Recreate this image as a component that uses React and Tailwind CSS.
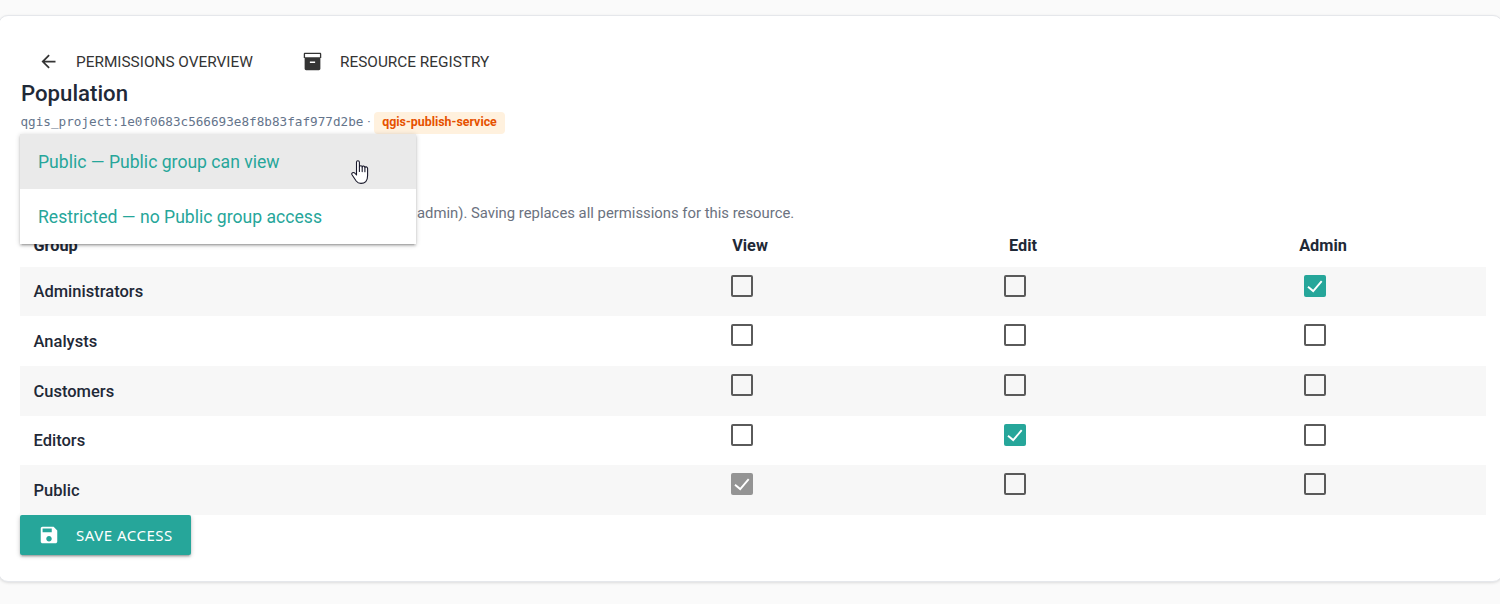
const GROUPS = [
  { name: 'Administrators', view: 'off', edit: 'off', admin: 'on', height: 'h-[49px]' },
  { name: 'Analysts', view: 'off', edit: 'off', admin: 'off', height: 'h-[50px]' },
  { name: 'Customers', view: 'off', edit: 'off', admin: 'off', height: 'h-[50px]' },
  { name: 'Editors', view: 'off', edit: 'on', admin: 'off', height: 'h-[49px]' },
  { name: 'Public', view: 'locked', edit: 'off', admin: 'off', height: 'h-[50px]' },
];

const COLUMNS = 'grid grid-cols-[594px_272px_274px_326px]';

const BOX_STYLES = {
  off: 'border-2 border-[#5a5a5a]',
  on: 'bg-[#26a69a]',
  locked: 'bg-[#949494]',
};

function Icon({ d, className }) {
  return (
    <svg viewBox="0 0 24 24" className={className} fill="currentColor" aria-hidden="true">
      <path d={d} />
    </svg>
  );
}

const ARROW_BACK = 'M20 11H7.83l5.59-5.59L12 4l-8 8 8 8 1.41-1.41L7.83 13H20v-2z';
const INVENTORY =
  'M20.5 2h-17C2.6 2 2 2.6 2 3.5V8h1v12.3c0 .9.8 1.7 1.7 1.7h14.6c.9 0 1.7-.8 1.7-1.7V8h1V3.5c0-.9-.6-1.5-1.5-1.5zM15 13.7H9V12h6v1.7zm5.5-6.500h-17V3.500h17v3.700z';
const SAVE =
  'M17 3H5c-1.11 0-2 .9-2 2v14c0 1.1.89 2 2 2h14c1.1 0 2-.9 2-2V7l-4-4zm-5 16c-1.66 0-3-1.34-3-3s1.34-3 3-3 3 1.34 3 3-1.34 3-3 3zm3-10H5V5h10v4z';

function Checkbox({ state }) {
  return (
    <div className="flex justify-center pt-2">
      <div className="w-[38px]">
        <span className={`block size-[22px] rounded-[2px] ${BOX_STYLES[state]}`}>
          {state !== 'off' && (
            <svg viewBox="0 0 22 22" className="block size-[22px]" fill="none" stroke="#fff" strokeWidth="1.9" aria-hidden="true">
              <path d="M4 11.7 9.2 16.1 17.7 6.2" />
            </svg>
          )}
        </span>
      </div>
    </div>
  );
}

function AccessMenu() {
  return (
    <ul className="absolute top-0 left-0 w-[396px] bg-white text-[17.6px] text-[#26a69a] shadow-[0_2px_2px_0_rgba(0,0,0,0.14),0_3px_1px_-2px_rgba(0,0,0,0.12),0_1px_5px_0_rgba(0,0,0,0.2)]">
      <li className="flex h-[55px] items-center bg-[#eaeaea] pt-[2px] pl-[18px]">Public — Public group can view</li>
      <li className="flex h-[55px] items-center pt-[2px] pl-[18px]">Restricted — no Public group access</li>
      <li className="absolute top-[26px] left-[331px]" aria-hidden="true">
        <svg viewBox="0 0 18 24" className="block h-6 w-[18px]" fill="#fff" stroke="#18182a" strokeWidth="1.1" strokeLinejoin="round" strokeLinecap="round">
          <path d="M5.5 14V2.2Q5.5.8 6.9.8T8.4 2.2V7q.2-1.3 1.5-1.2T11.2 7q.3-1.1 1.5-.9T13.9 7.6q.3-.9 1.4-.7t1.3 1.5V15.5Q16.6 19.8 14.8 21.6 13 23.4 10 23.4q-3 0-4.8-2.4L1 14.8Q.3 13.3 1.5 12.7T3.7 13L5.5 15z" />
          <path d="M8.4 7v4.4M11.2 7.3v4.3M13.9 7.8v4" />
        </svg>
      </li>
    </ul>
  );
}

export default function App() {
  return (
    <div className="h-[604px] overflow-hidden bg-[#fafafa] pt-[15px] font-['Roboto','Liberation_Sans',sans-serif] text-[#1f2937]">
      <main className="-mr-[3px] -ml-[2px] h-[567px] rounded-[10px] border border-[#e5e7eb] bg-white pt-7 pl-[21px] shadow-[0_1px_3px_rgba(0,0,0,0.12)]">
        <nav className="flex h-[34px] items-center text-[15.36px] whitespace-nowrap text-[#343434]">
          <a className="flex w-[263px] items-center pl-[18px]">
            <Icon d={ARROW_BACK} className="size-[21px]" />
            <span className="ml-[17px] pt-[3px]">PERMISSIONS OVERVIEW</span>
          </a>
          <a className="flex items-center pl-[19px]">
            <Icon d={INVENTORY} className="size-[21px]" />
            <span className="ml-[17px] pt-[3px]">RESOURCE REGISTRY</span>
          </a>
        </nav>

        <h1 className="flex h-[31px] items-center pl-px text-[22.2px] font-medium">Population</h1>

        <div className="flex h-[25px] items-center whitespace-nowrap text-[#64748b]">
          <code className="w-[344px] pl-[0.5px] font-['DejaVu_Sans_Mono',monospace] text-[12.67px]">
            qgis_project:1e0f0683c566693e8f8b83faf977d2be
          </code>
          <span className="w-[10px] text-center text-[13px]">·</span>
          <span className="mt-[2px] flex h-[22px] w-[131px] items-center justify-center rounded-[4px] bg-[#fff1de] text-[12.4px] font-bold text-[#e65100]">
            qgis-publish-service
          </span>
        </div>

        <section className="relative w-[1466px]">
          <div className="h-[69px]" />
          <p className="flex h-[21px] items-center pl-[397px] text-[14.85px] whitespace-nowrap text-[#6b7280]">
            admin). Saving replaces all permissions for this resource.
          </p>

          <div className={`${COLUMNS} h-[43px] items-center pt-[2px] text-[16.3px] font-bold`}>
            <span className="pl-[13.5px]">Group</span>
            <span className="text-center">View</span>
            <span className="text-center">Edit</span>
            <span className="text-center">Admin</span>
          </div>
          {GROUPS.map((g) => (
            <div key={g.name} className={`${COLUMNS} ${g.height} odd:bg-white even:bg-[#f7f7f7]`}>
              <span className="flex items-center pt-[2px] pl-[13.5px] text-[16.5px] font-medium">{g.name}</span>
              <Checkbox state={g.view} />
              <Checkbox state={g.edit} />
              <Checkbox state={g.admin} />
            </div>
          ))}
          <AccessMenu />
        </section>

        <button className="flex h-10 w-[171px] items-center rounded-[2px] bg-[#26a69a] pl-[18px] font-['Noto_Sans','Open_Sans',sans-serif] text-[15px] whitespace-nowrap text-white shadow-[0_2px_2px_0_rgba(0,0,0,0.14),0_3px_1px_-2px_rgba(0,0,0,0.12),0_1px_5px_0_rgba(0,0,0,0.2)]">
          <Icon d={SAVE} className="size-[22px]" />
          <span className="ml-4 tracking-[0.5px]">SAVE ACCESS</span>
        </button>
      </main>
    </div>
  );
}
